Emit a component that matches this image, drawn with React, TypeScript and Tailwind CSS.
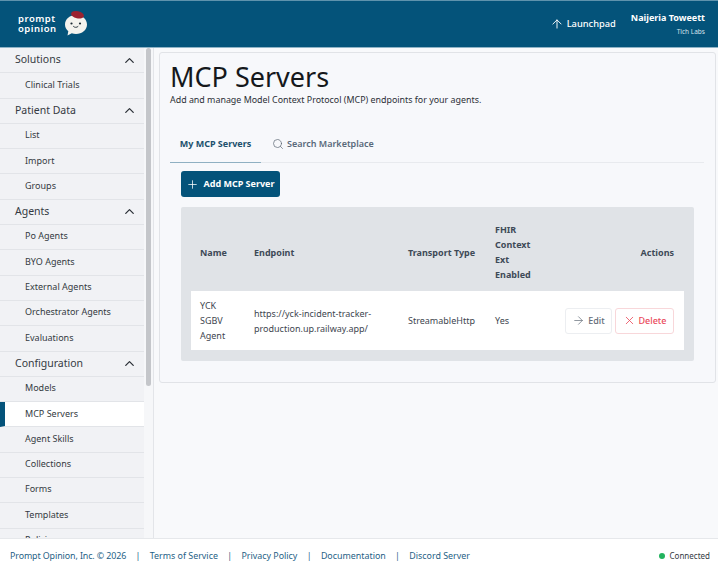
import { ArrowRight, ArrowUp, ChevronUp, Plus, Search, X } from "lucide-react";

const font = "font-['Noto_Sans',sans-serif]";

type Item = { label: string; head?: boolean; active?: boolean };

const items: Item[] = [
  { label: "Solutions", head: true },
  { label: "Clinical Trials" },
  { label: "Patient Data", head: true },
  { label: "List" },
  { label: "Import" },
  { label: "Groups" },
  { label: "Agents", head: true },
  { label: "Po Agents" },
  { label: "BYO Agents" },
  { label: "External Agents" },
  { label: "Orchestrator Agents" },
  { label: "Evaluations" },
  { label: "Configuration", head: true },
  { label: "Models" },
  { label: "MCP Servers", active: true },
  { label: "Agent Skills" },
  { label: "Collections" },
  { label: "Forms" },
  { label: "Templates" },
  { label: "Policies" },
];

function Logo() {
  return (
    <div className="flex items-center gap-[6px] pl-[18px]">
      <div className="flex flex-col text-[9.500px] leading-[10px] font-semibold tracking-[0.5px] text-white">
        <span>prompt</span>
        <span>opinion</span>
      </div>
      <svg width="26" height="26" viewBox="0 0 26 26" className="mt-[-2px]">
        <path d="M13 5c6 0 11 4 11 9.500S19 24 13 24c-1.500 0-3-.3-4.200-.8L4.500 25.500l.8-4.200C3.200 19.500 2 17.200 2 14.500 2 9 7 5 13 5z" fill="#f4f3ee" />
        <ellipse cx="14.500" cy="4.800" rx="6.500" ry="3.600" fill="#9b2230" transform="rotate(12 14.500 4.800)" />
        <circle cx="8.500" cy="13.500" r="1.100" fill="#1d2a33" />
        <circle cx="17" cy="13.500" r="1.100" fill="#1d2a33" />
        <path d="M10.500 16.500c1.200 1.200 3.300 1.200 4.500 0" fill="none" stroke="#1d2a33" strokeWidth="0.900" strokeLinecap="round" />
      </svg>
    </div>
  );
}

function Header() {
  return (
    <header className="flex h-[48px] shrink-0 items-center justify-between border-t border-b border-t-[#5f93ad] border-b-[#8fb3c6] bg-[#04537a] pr-[13px] text-white">
      <Logo />
      <div className="flex items-center">
        <ArrowUp size={14} strokeWidth={1.600} className="mr-[3px]" />
        <span className="mr-[15px] text-[9.300px] font-medium">Launchpad</span>
        <div className="flex flex-col items-end pt-[1px]">
          <span className="text-[9px] leading-[13px] font-bold">Naijeria Toweett</span>
          <span className="mt-[2px] text-[6.500px] leading-[12px] text-[#d5e2ea]">Tich Labs</span>
        </div>
      </div>
    </header>
  );
}

function Sidebar() {
  return (
    <aside className="flex w-[154px] shrink-0 overflow-hidden border-r border-[#e3e5e9] bg-[#f6f7f9]">
      <nav className="w-[144px] shrink-0">
        {items.map((it) =>
          it.head ? (
            <div key={it.label} className="flex h-[25.300px] items-center justify-between border-b border-[#e2e4e8] bg-[#f1f2f5] pr-[7px] pl-[15px] text-[10.500px] text-[#343a42]">
              <span>{it.label}</span>
              <ChevronUp size={15} strokeWidth={2} className="text-[#2a2f36]" />
            </div>
          ) : (
            <div
              key={it.label}
              className={
                it.active
                  ? "flex h-[25.300px] items-center border-b border-[#e2e4e8] border-l-[5px] border-l-[#04537a] bg-white pb-[2px] pl-[20px] text-[9px] text-[#343a42]"
                  : "flex h-[25.300px] items-center border-b border-[#e2e4e8] bg-[#f1f2f5] pb-[2px] pl-[25px] text-[9px] text-[#343a42]"
              }
            >
              {it.label}
            </div>
          ),
        )}
      </nav>
      <div className="ml-[2px] h-[338px] w-[5px] rounded-full bg-[#c4c6ca]" />
    </aside>
  );
}

function Card() {
  return (
    <section className="h-[331px] rounded-[3px] border border-[#e1e3e7] bg-[#f7f8fb] pt-[9px]">
      <div className="pl-[10px]">
        <h1 className="text-[27px] leading-[30px] font-normal text-[#15181c]">MCP Servers</h1>
        <p className="mt-[1px] text-[8.900px] leading-[14px] text-[#2b2f36]">Add and manage Model Context Protocol (MCP) endpoints for your agents.</p>
      </div>
      <div className="mt-[18px] mr-[11px] ml-[10px] flex h-[38px] border-b border-[#e8eaee]">
        <div className="flex h-[38px] w-[91px] items-center justify-center border-b border-[#8fb0c2] text-[9px] font-bold text-[#20506d]">My MCP Servers</div>
        <div className="ml-[11px] flex items-center gap-[3px] text-[9px] font-semibold text-[#59697a]">
          <Search size={12} strokeWidth={1.400} className="text-[#5b6672]" />
          <span>Search Marketplace</span>
        </div>
      </div>
      <div className="mt-[8px] ml-[21px]">
        <button className="flex h-[26px] w-[99px] items-center justify-center gap-[4px] rounded-[3px] bg-[#04537a] text-[9px] font-bold text-white">
          <Plus size={13} strokeWidth={1.400} />
          Add MCP Server
        </button>
      </div>
      <div className="mt-[10px] ml-[21px] w-[513px] rounded-[2px] bg-[#e0e3e7] px-[10px] pb-[11px]">
        <div className="grid h-[84px] grid-cols-[54px_154px_87px_70px_1fr] items-center pt-[6px] pl-[9px] text-[9px] leading-[15px] font-bold text-[#3e4a57]">
          <div>Name</div>
          <div>Endpoint</div>
          <div>Transport Type</div>
          <div>
            FHIR
            <br />
            Context
            <br />
            Ext
            <br />
            Enabled
          </div>
          <div className="pr-[10px] text-right">Actions</div>
        </div>
        <div className="grid h-[59px] grid-cols-[54px_154px_87px_70px_1fr] items-center bg-white pl-[9px] text-[9px] leading-[15px] text-[#3e4650]">
          <div>
            YCK
            <br />
            SGBV
            <br />
            Agent
          </div>
          <div>
            https://yck-incident-tracker-
            <br />
            production.up.railway.app/
          </div>
          <div>StreamableHttp</div>
          <div>Yes</div>
          <div className="flex justify-end gap-[3px] pr-[10px]">
            <button className="flex h-[26px] w-[47px] items-center justify-center gap-[3px] rounded-[3px] border border-[#eceef1] bg-white text-[9px] font-medium text-[#636c78]">
              <ArrowRight size={13} strokeWidth={1.300} />
              Edit
            </button>
            <button className="flex h-[26px] w-[59px] items-center justify-center gap-[3px] rounded-[3px] border border-[#f8d7da] bg-white text-[9px] font-medium text-[#ea4a5b]">
              <X size={13} strokeWidth={1.500} />
              Delete
            </button>
          </div>
        </div>
      </div>
    </section>
  );
}

function Footer() {
  return (
    <footer className="flex h-[35px] shrink-0 items-center justify-between border-t border-[#e6e8eb] bg-white pr-[8px] pl-[10px] text-[8.900px]">
      <div className="flex items-center text-[#1f5f86]">
        <span className="tracking-[-0.1px]">Prompt Opinion, Inc. © 2026</span>
        <span className="mx-[9.300px]">|</span>
        <span>Terms of Service</span>
        <span className="mx-[9.300px]">|</span>
        <span>Privacy Policy</span>
        <span className="mx-[9.300px]">|</span>
        <span>Documentation</span>
        <span className="mx-[9.300px]">|</span>
        <span>Discord Server</span>
      </div>
      <div className="flex items-center gap-[5px] text-[8px] text-[#343a42]">
        <span className="h-[6px] w-[6px] rounded-full bg-[#22b35e]" />
        Connected
      </div>
    </footer>
  );
}

export default function App() {
  return (
    <div className={`${font} flex h-[573px] w-[718px] flex-col overflow-hidden bg-[#f8f9fb]`}>
      <Header />
      <div className="flex min-h-0 flex-1">
        <Sidebar />
        <main className="flex-1 pt-[4px] pr-[2px] pl-[5px]">
          <Card />
        </main>
      </div>
      <Footer />
    </div>
  );
}
